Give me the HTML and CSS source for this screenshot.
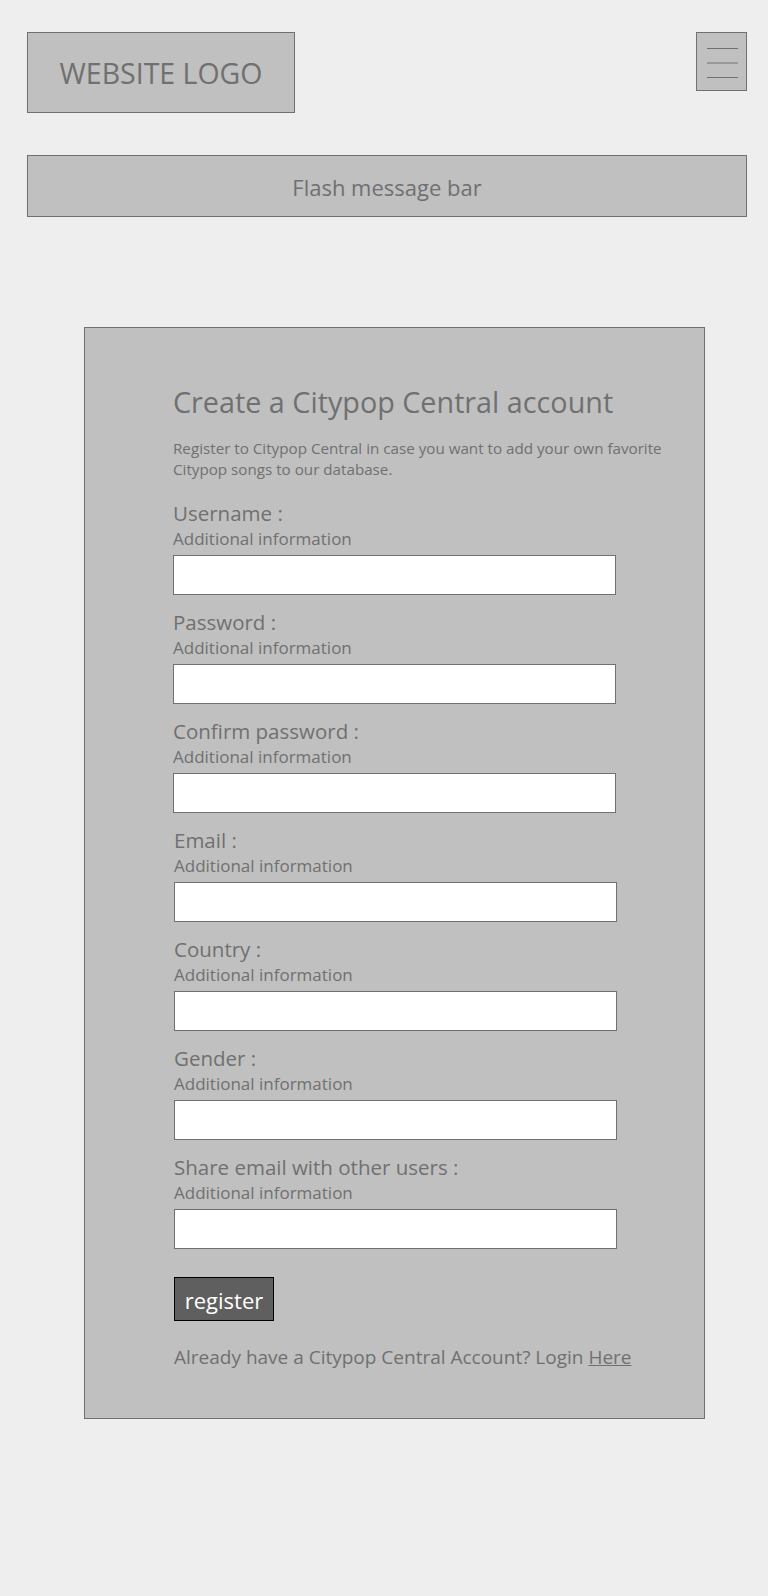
FILE: index.html
```html
<!DOCTYPE html>
<html lang="en">
<head>
<meta charset="utf-8">
<title>Register - Citypop Central</title>
<link rel="stylesheet" href="styles.css">
</head>
<body>
<div class="page">
  <header class="header">
    <div class="logo">WEBSITE LOGO</div>
    <button class="burger" aria-label="Menu">
      <span class="line"></span>
      <span class="line mid"></span>
      <span class="line"></span>
    </button>
  </header>
  <div class="flash">Flash message bar</div>
  <main class="card">
    <h1 class="title">Create a Citypop Central account</h1>
    <p class="desc">Register to Citypop Central in case you want to add your own favorite Citypop songs to our database.</p>
    <form class="form">
      <div class="field">
        <label class="label">Username :</label>
        <span class="info">Additional information</span>
        <input class="input" type="text">
      </div>
      <div class="field">
        <label class="label">Password :</label>
        <span class="info">Additional information</span>
        <input class="input" type="password">
      </div>
      <div class="field">
        <label class="label">Confirm password :</label>
        <span class="info">Additional information</span>
        <input class="input" type="password">
      </div>
      <div class="field shift">
        <label class="label">Email :</label>
        <span class="info">Additional information</span>
        <input class="input" type="text">
      </div>
      <div class="field shift">
        <label class="label">Country :</label>
        <span class="info">Additional information</span>
        <input class="input" type="text">
      </div>
      <div class="field shift">
        <label class="label">Gender :</label>
        <span class="info">Additional information</span>
        <input class="input" type="text">
      </div>
      <div class="field shift">
        <label class="label">Share email with other users :</label>
        <span class="info">Additional information</span>
        <input class="input" type="text">
      </div>
      <button class="register" type="button">register</button>
      <p class="login">Already have a Citypop Central Account? Login <a href="#" class="here">Here</a></p>
    </form>
  </main>
</div>
</body>
</html>
```
FILE: styles.css
```css
* { box-sizing: border-box; }
html, body { margin: 0; padding: 0; }
body {
  background: #eeeeee;
  font-family: "Open Sans", "Noto Sans", sans-serif;
  color: #707070;
  min-height: 1596px;
}
.page {
  padding: 32px 21px 0 27px;
}
.header {
  display: flex;
  justify-content: space-between;
  align-items: flex-start;
}
.logo {
  width: 268px;
  height: 81px;
  background: #c0c0c0;
  border: 1px solid #707070;
  display: flex;
  align-items: center;
  justify-content: center;
  font-size: 28.5px;
}
.burger {
  width: 51px;
  height: 59px;
  background: #c0c0c0;
  border: 1px solid #707070;
  padding: 15px 8px 0 10px;
  margin: 0;
  display: flex;
  flex-direction: column;
  justify-content: flex-start;
  align-items: stretch;
  gap: 13px;
}
.line {
  display: block;
  flex: 0 0 auto;
  height: 1px;
  background: #707070;
}
.line.mid {
  height: 2px;
  background: #999999;
}
.flash {
  margin-top: 42px;
  height: 62px;
  background: #c0c0c0;
  border: 1px solid #707070;
  display: flex;
  align-items: center;
  justify-content: center;
  font-size: 22px;
  padding-top: 2px;
}
.card {
  margin: 110px 0 0 57px;
  width: 621px;
  background: #c0c0c0;
  border: 1px solid #707070;
  padding: 54px 40px 48px 88px;
}
.title {
  margin: 0;
  font-size: 28.75px;
  font-weight: 400;
  line-height: 40px;
}
.desc {
  margin: 16px 0 0;
  font-size: 15.2px;
  line-height: 21px;
}
.form {
  margin-top: 19px;
  display: flex;
  flex-direction: column;
  align-items: flex-start;
}
.field {
  display: flex;
  flex-direction: column;
  margin-bottom: 13px;
}
.field.shift { padding-left: 1px; }
.label {
  font-size: 20.5px;
  line-height: 28px;
}
.info {
  font-size: 17px;
  line-height: 24px;
}
.input {
  margin-top: 4px;
  width: 443px;
  height: 40px;
  background: #ffffff;
  border: 1px solid #707070;
  padding: 0 8px;
  font: inherit;
}
.register {
  margin: 15px 0 0 1px;
  width: 100px;
  height: 44px;
  background: #5f5f5f;
  border: 1px solid #000000;
  color: #ffffff;
  font-family: "Open Sans", "Noto Sans", sans-serif;
  font-size: 22px;
  padding: 2px 0 0;
  line-height: 1;
}
.login {
  margin: 23px 0 0 1px;
  font-size: 19px;
  line-height: 26px;
}
.here {
  color: #707070;
  text-decoration: underline;
}
```
